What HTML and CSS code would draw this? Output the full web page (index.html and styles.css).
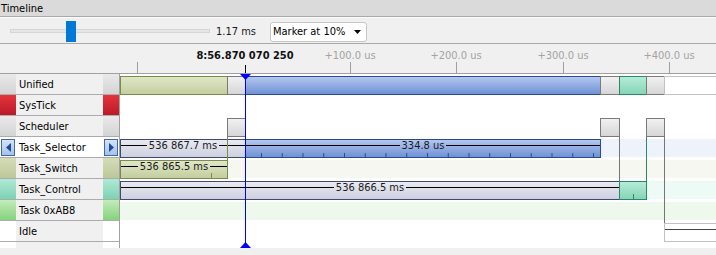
FILE: index.html
```html
<!DOCTYPE html>
<html>
<head>
<meta charset="utf-8">
<title>Timeline</title>
<link rel="stylesheet" href="styles.css">
</head>
<body>
<div class="app">
  <div class="titlebar">Timeline</div>

  <div class="toolbar">
    <div class="slider">
      <div class="slider-track"></div>
      <div class="slider-thumb" style="left:56px"></div>
    </div>
    <span class="zoom-value">1.17 ms</span>
    <div class="combo">
      <span>Marker at 10%</span>
      <svg class="combo-arrow" width="7" height="4" viewBox="0 0 7 4"><polygon points="0,0 7,0 3.5,4" fill="#000"/></svg>
    </div>
  </div>

  <div class="ruler">
    <div class="ruler-gutter"></div>
    <div class="ruler-scale">
      <span class="tick" style="left:17px"></span>
      <span class="tick" style="left:230px"></span>
      <span class="tick" style="left:336px"></span>
      <span class="tick" style="left:443px"></span>
      <span class="tick" style="left:549px"></span>
      <span class="tick tick-now" style="left:125px"></span>
      <span class="tick-label tick-label-now" style="left:125px">8:56.870 070 250</span>
      <span class="tick-label" style="left:230px">+100.0 us</span>
      <span class="tick-label" style="left:336px">+200.0 us</span>
      <span class="tick-label" style="left:443px">+300.0 us</span>
      <span class="tick-label" style="left:549px">+400.0 us</span>
    </div>
  </div>

  <div class="rows">
    <!-- Unified -->
    <div class="label">
      <span class="strip strip-gray"></span>
      <span class="label-name">Unified</span>
      <span class="strip strip-gray"></span>
    </div>
    <div class="track">
      <div class="bar bar-olive" style="left:0;width:108px"></div>
      <div class="bar bar-gray" style="left:107px;width:19px"></div>
      <div class="bar bar-blue" style="left:125px;width:356px"></div>
      <div class="bar bar-gray" style="left:480px;width:20px"></div>
      <div class="bar bar-teal" style="left:499px;width:28px"></div>
      <div class="bar bar-gray" style="left:526px;width:19px"></div>
      <div class="bar bar-idle" style="left:544px;width:80px"></div>
    </div>

    <!-- SysTick -->
    <div class="label">
      <span class="strip strip-red"></span>
      <span class="label-name">SysTick</span>
      <span class="strip strip-red"></span>
    </div>
    <div class="track"></div>

    <!-- Scheduler -->
    <div class="label">
      <span class="strip strip-gray"></span>
      <span class="label-name">Scheduler</span>
      <span class="strip strip-gray"></span>
    </div>
    <div class="track">
      <div class="bar bar-gray" style="left:107px;width:19px"></div>
      <div class="bar bar-gray" style="left:480px;width:20px"></div>
      <div class="bar bar-gray" style="left:526px;width:19px"></div>
    </div>

    <!-- Task_Selector -->
    <div class="label label-selected">
      <span class="strip strip-white"><span class="nav-btn"><svg width="5" height="9" viewBox="0 0 5 9"><polygon points="5,0 5,9 0,4.5" fill="#1f4b9c"/></svg></span></span>
      <span class="label-name">Task_Selector</span>
      <span class="strip strip-white"><span class="nav-btn"><svg width="5" height="9" viewBox="0 0 5 9"><polygon points="0,0 5,4.5 0,9" fill="#1f4b9c"/></svg></span></span>
    </div>
    <div class="track track-blue">
      <div class="bar bar-lavender" style="left:0;width:126px"><div class="bar-label"><span>536 867.7 ms</span></div></div>
      <div class="bar bar-blue" style="left:125px;width:356px"><div class="bar-label"><span>334.8 us</span></div><div class="bar-ticks"></div></div>
    </div>

    <!-- Task_Switch -->
    <div class="label">
      <span class="strip strip-olive"></span>
      <span class="label-name">Task_Switch</span>
      <span class="strip strip-olive"></span>
    </div>
    <div class="track track-olive">
      <div class="bar bar-olive" style="left:0;width:108px"><div class="bar-label"><span>536 865.5 ms</span></div><span class="bar-tick tick-olive" style="left:90px"></span></div>
    </div>

    <!-- Task_Control -->
    <div class="label">
      <span class="strip strip-teal"></span>
      <span class="label-name">Task_Control</span>
      <span class="strip strip-teal"></span>
    </div>
    <div class="track track-teal">
      <div class="bar bar-lavender" style="left:0;width:500px"><div class="bar-label"><span>536 866.5 ms</span></div></div>
      <div class="bar bar-teal" style="left:499px;width:28px"><span class="bar-tick tick-teal" style="left:13px"></span></div>
    </div>

    <!-- Task 0xAB8 -->
    <div class="label">
      <span class="strip strip-green"></span>
      <span class="label-name">Task 0xAB8</span>
      <span class="strip strip-green"></span>
    </div>
    <div class="track track-green"></div>

    <!-- Idle -->
    <div class="label">
      <span class="strip strip-white"></span>
      <span class="label-name">Idle</span>
      <span class="strip strip-white"></span>
    </div>
    <div class="track">
      <div class="bar bar-idle" style="left:544px;width:80px"><div class="bar-label bar-label-plain"></div></div>
    </div>

    <!-- filler -->
    <div class="label label-filler">
      <span class="strip strip-white"></span>
      <span class="label-name"></span>
      <span class="strip strip-white"></span>
    </div>
    <div class="track"></div>

    <div class="overlay">
      <span class="tline tline-olive" style="left:107px;top:63px;height:23px"></span>
      <span class="tline tline-gray" style="left:499px;top:63px;height:44px"></span>
      <span class="tline tline-teal" style="left:526px;top:63px;height:44px"></span>
      <span class="tline tline-gray" style="left:544px;top:63px;height:86px"></span>
      <span class="marker-line" style="left:125px"></span>
      <svg class="marker-head marker-top" style="left:120px" width="11" height="6" viewBox="0 0 11 6"><polygon points="0,0 11,0 5.5,6" fill="#0000ff"/></svg>
      <svg class="marker-head marker-bottom" style="left:120px" width="11" height="6" viewBox="0 0 11 6"><polygon points="5.5,0 11,6 0,6" fill="#0000ff"/></svg>
    </div>
  </div>

  <div class="statusbar"></div>
</div>
</body>
</html>
```
FILE: styles.css
```css
* { box-sizing: border-box; }
html, body { margin: 0; padding: 0; }
body {
  width: 716px;
  height: 255px;
  overflow: hidden;
  background: #f0f0f0;
  font-family: "DejaVu Sans Condensed", "Liberation Sans", sans-serif;
  font-size: 11px;
  color: #000;
}

.titlebar {
  height: 17px;
  line-height: 17px;
  padding-left: 1px;
  background: #dadada;
  border-bottom: 1px solid #a9a9a9;
}

.toolbar {
  height: 27px;
  display: flex;
  align-items: center;
  padding: 2px 0 0 10px;
  background: #f0f0f0;
  border-top: 1px solid #fbfbfb;
  border-bottom: 1px solid #a9a9a9;
}

.slider {
  position: relative;
  width: 200px;
  height: 21px;
}
.slider-track {
  position: absolute;
  left: 0;
  right: 0;
  top: 8px;
  height: 4px;
  background: #e6e6e6;
  border: 1px solid #d6d6d6;
}
.slider-thumb {
  position: absolute;
  top: 0;
  width: 10px;
  height: 21px;
  background: #0078d7;
}

.zoom-value {
  width: 54px;
  margin-left: 6px;
  color: #1a1a1a;
}

.combo {
  width: 97px;
  height: 20px;
  display: flex;
  align-items: center;
  justify-content: space-between;
  padding: 0 5px 0 2px;
  background: #fff;
  border: 1px solid #c6c6c6;
  border-radius: 3px;
}
.combo-arrow { display: block; }

.ruler {
  height: 30px;
  display: grid;
  grid-template-columns: 120px 1fr;
  border-bottom: 1px solid #a0a0a0;
}
.ruler-scale { position: relative; }
.tick {
  position: absolute;
  bottom: 0;
  width: 1px;
  height: 11px;
  background: #a0a0a0;
}
.tick-now {
  height: 8px;
  background: #000;
}
.tick-label {
  position: absolute;
  top: 5px;
  line-height: 14px;
  white-space: nowrap;
  transform: translateX(-50%);
  color: #a3a3a3;
}
.tick-label-now {
  color: #111;
  font-weight: bold;
  font-size: 11px;
}

.rows {
  position: relative;
  display: grid;
  grid-template-columns: 120px 1fr;
  grid-template-rows: repeat(8, 21px) 6px;
  background: #fff;
}

.label {
  display: grid;
  grid-template-columns: 16px 87px 16px;
  border-right: 1px solid #a0a0a0;
  border-bottom: 1px solid #acacac;
}
.label-filler { border-bottom: none; }
.label-name {
  display: block;
  padding: 1px 0 0 3px;
  line-height: 19px;
  background: #f0f0f0;
  white-space: nowrap;
  overflow: hidden;
}
.label-selected .label-name { background: #fff; }

.strip { display: block; }
.strip-gray { background: linear-gradient(#e9e9e9, #d4d4d4); }
.strip-red { background: linear-gradient(#e5333d, #b81b27); }
.strip-olive { background: linear-gradient(#d5dcb9, #bdc799); }
.strip-teal { background: linear-gradient(#afe9d5, #7ed2b3); }
.strip-green { background: linear-gradient(#c4ecbb, #85d27d); }
.strip-white { background: #fff; }

.nav-btn {
  display: flex;
  align-items: center;
  justify-content: center;
  height: 17px;
  margin: 2px 1px 1px 1px;
  background: linear-gradient(#d6e3f6, #a8c1e8);
  border: 1px solid #3c69b0;
}
.nav-btn svg { display: block; }

.track {
  position: relative;
  overflow: hidden;
}
.track-blue { background: linear-gradient(transparent 2px, #eef2fa 2px, #eef2fa 20px, transparent 20px); }
.track-olive { background: linear-gradient(transparent 2px, #f6f7f0 2px, #f6f7f0 20px, transparent 20px); }
.track-teal { background: linear-gradient(transparent 2px, #eefaf6 2px, #eefaf6 20px, transparent 20px); }
.track-green { background: linear-gradient(transparent 2px, #eff8ec 2px, #eff8ec 20px, transparent 20px); }

.bar {
  position: absolute;
  top: 2px;
  height: 19px;
  border: 1px solid;
}
.bar-olive { background: linear-gradient(#dfe6c9, #c3ce9d); border-color: #7b8b4a; }
.bar-gray { background: linear-gradient(#f1f1f1, #d6d6d6); border-color: #7a7a7a; }
.bar-blue { background: linear-gradient(#b3c7ef, #7091d6); border-color: #2a4c8e; }
.bar-teal { background: linear-gradient(#b6ebd8, #85d5b6); border-color: #2a8a68; }
.bar-lavender { background: linear-gradient(#e9eaf1, #cdd1df); border-color: #3e4a70; }
.bar-idle { background: #fff; border-color: #c2c2c2; }

.bar-label {
  display: flex;
  align-items: center;
  gap: 2px;
  height: 11px;
  font-family: "Liberation Sans Narrow", "DejaVu Sans Condensed", "Liberation Sans", sans-serif;
  font-size: 11px;
  line-height: 11px;
  color: #1a1a1a;
  white-space: nowrap;
}
.bar-label::before,
.bar-label::after {
  content: "";
  flex: 1;
  border-top: 1px solid #000;
}
.bar-label-plain::before { border-top-color: #444; }
.bar-label-plain::after { display: none; }

.bar-ticks {
  position: absolute;
  left: 0;
  right: 0;
  bottom: 0;
  height: 4px;
  background-image: linear-gradient(to right, #2a4c8e 0 1px, transparent 1px);
  background-size: 20.75px 100%;
  background-position: 15px 0;
  background-repeat: repeat-x;
}
.bar-tick {
  position: absolute;
  bottom: 0;
  width: 1px;
  height: 5px;
}
.tick-olive { background: #7b8b4a; }
.tick-teal { background: #2a8a68; }

.overlay {
  position: absolute;
  left: 120px;
  top: 0;
  right: 0;
  bottom: 0;
  pointer-events: none;
}
.tline {
  position: absolute;
  width: 1px;
}
.tline-olive { background: #7b8b4a; }
.tline-gray { background: #767676; }
.tline-teal { background: #2a8a68; }

.marker-line {
  position: absolute;
  top: 0;
  bottom: 0;
  width: 1px;
  background: #0000ff;
}
.marker-head {
  position: absolute;
  display: block;
}
.marker-top { top: 0; }
.marker-bottom { bottom: 0; }

.statusbar {
  height: 7px;
  background: #f0f0f0;
}
```
